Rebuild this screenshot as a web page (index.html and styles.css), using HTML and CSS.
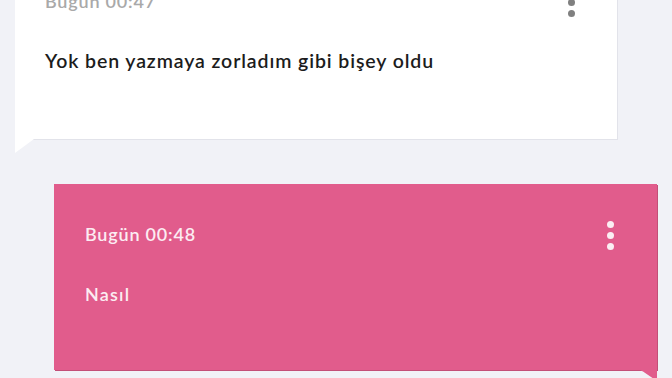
FILE: index.html
```html
<!DOCTYPE html>
<html lang="tr">
<head>
<meta charset="utf-8">
<link rel="stylesheet" href="styles.css">
</head>
<body>
<div class="thread">
  <div class="msg msg-in">
    <div class="msg-head">
      <span class="time">Bugün 00:47</span>
      <span class="dots"><i></i><i></i><i></i></span>
    </div>
    <div class="body">Yok ben yazmaya zorladım gibi bişey oldu</div>
  </div>
  <div class="msg msg-out">
    <div class="msg-head">
      <span class="time">Bugün 00:48</span>
      <span class="dots"><i></i><i></i><i></i></span>
    </div>
    <div class="body">Nasıl</div>
  </div>
</div>
</body>
</html>
```
FILE: styles.css
```css
html, body {
  margin: 0;
  padding: 0;
  background: #f1f2f7;
  width: 672px;
  height: 378px;
  overflow: hidden;
  font-family: Lato, "Noto Sans", sans-serif;
}
.thread {
  display: flex;
  flex-direction: column;
  gap: 45px;
  margin-top: -49px;
}
.msg {
  position: relative;
  box-sizing: border-box;
  height: 188px;
  padding: 39px 0 0 30px;
}
.msg-in {
  margin-left: 15px;
  width: 602px;
  background: #ffffff;
  box-shadow: 1px 1px 0 #e2e3ea;
}
.msg-in::after {
  content: "";
  position: absolute;
  left: 0;
  top: 100%;
  width: 19px;
  height: 14px;
  background: #ffffff;
  clip-path: polygon(0 0, 100% 0, 0 100%);
}
.msg-out {
  margin-left: 54px;
  width: 603px;
  height: 186px;
  padding-left: 31px;
  background: #e15c8c;
  box-shadow: 1px 1px 0 #c24f78;
  color: #fcecf2;
}
.msg-out::after {
  content: "";
  position: absolute;
  right: 0;
  top: 100%;
  width: 20px;
  height: 10px;
  background: #e15c8c;
  clip-path: polygon(0 0, 100% 0, 100% 100%, 92% 100%, 30% 15%, 15% 0);
}
.msg-head {
  display: flex;
  justify-content: space-between;
  align-items: center;
  height: 22px;
  padding-right: 42px;
}
.msg-out .msg-head { padding-right: 43px; }
.time {
  font-size: 18px;
  font-weight: 600;
  letter-spacing: 0.8px;
  color: #a9a9a9;
}
.msg-out .time { color: #fcecf2; }
.dots {
  display: flex;
  flex-direction: column;
  gap: 4px;
  margin-top: 2px;
}
.dots i {
  display: block;
  width: 7px;
  height: 7px;
  border-radius: 50%;
  background: #808080;
}
.msg-out .dots i { background: #fbeef3; }
.body {
  margin-top: 37px;
  font-size: 19.5px;
  font-weight: 600;
  letter-spacing: 0.9px;
  color: #1c1c1c;
}
.msg-out .body { color: #fcecf2; font-size: 18px; letter-spacing: 1.2px; margin-top: 38px; }
```
